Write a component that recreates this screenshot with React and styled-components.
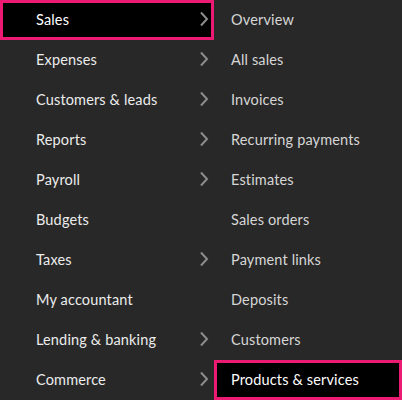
import React from "react";
import styled, { createGlobalStyle } from "styled-components";

const Global = createGlobalStyle`
  html, body { margin: 0; padding: 0; background: #282828; }
  body { font-family: "Lato", "Open Sans", sans-serif; }
`;

const Menu = styled.div`
  display: flex;
  width: 402px;
  height: 400px;
  background: #282828;
  overflow: hidden;
`;

const Column = styled.div`
  display: flex;
  flex-direction: column;
  width: ${(p) => p.$width || "auto"};
  flex: ${(p) => (p.$grow ? 1 : "none")};
`;

const Row = styled.div`
  box-sizing: border-box;
  height: 40px;
  display: flex;
  align-items: center;
  justify-content: space-between;
  padding-left: ${(p) => p.$pad}px;
  padding-right: 5px;
  padding-bottom: 2px;
  font-size: 14.5px;
  letter-spacing: 0.15px;
  color: ${(p) => (p.$active ? "#ffffff" : p.$dim ? "#d6d6d6" : "#ececec")};
  background: ${(p) => (p.$active ? "#000" : "transparent")};
  box-shadow: ${(p) => (p.$active ? "inset 0 0 0 3px #ec1a72" : "none")};
`;

const Chevron = () => (
  <svg width="10" height="16" viewBox="0 0 10 16" aria-hidden="true">
    <path d="M2 1.5 L8 8 L2 14.5" fill="none" stroke="#8c8c8c" strokeWidth="2" />
  </svg>
);

const left = [
  ["Sales", true],
  ["Expenses", true],
  ["Customers & leads", true],
  ["Reports", true],
  ["Payroll", true],
  ["Budgets", false],
  ["Taxes", true],
  ["My accountant", false],
  ["Lending & banking", true],
  ["Commerce", true],
];

const right = [
  "Overview",
  "All sales",
  "Invoices",
  "Recurring payments",
  "Estimates",
  "Sales orders",
  "Payment links",
  "Deposits",
  "Customers",
  "Products & services",
];

export default function App() {
  return (
    <>
      <Global />
      <Menu>
        <Column $width="214px">
          {left.map(([label, sub], i) => (
            <Row key={label} $pad={36} $active={i === 0}>
              <span>{label}</span>
              {sub && <Chevron />}
            </Row>
          ))}
        </Column>
        <Column $grow>
          {right.map((label, i) => (
            <Row key={label} $pad={17} $dim $active={i === right.length - 1}>
              <span>{label}</span>
            </Row>
          ))}
        </Column>
      </Menu>
    </>
  );
}
